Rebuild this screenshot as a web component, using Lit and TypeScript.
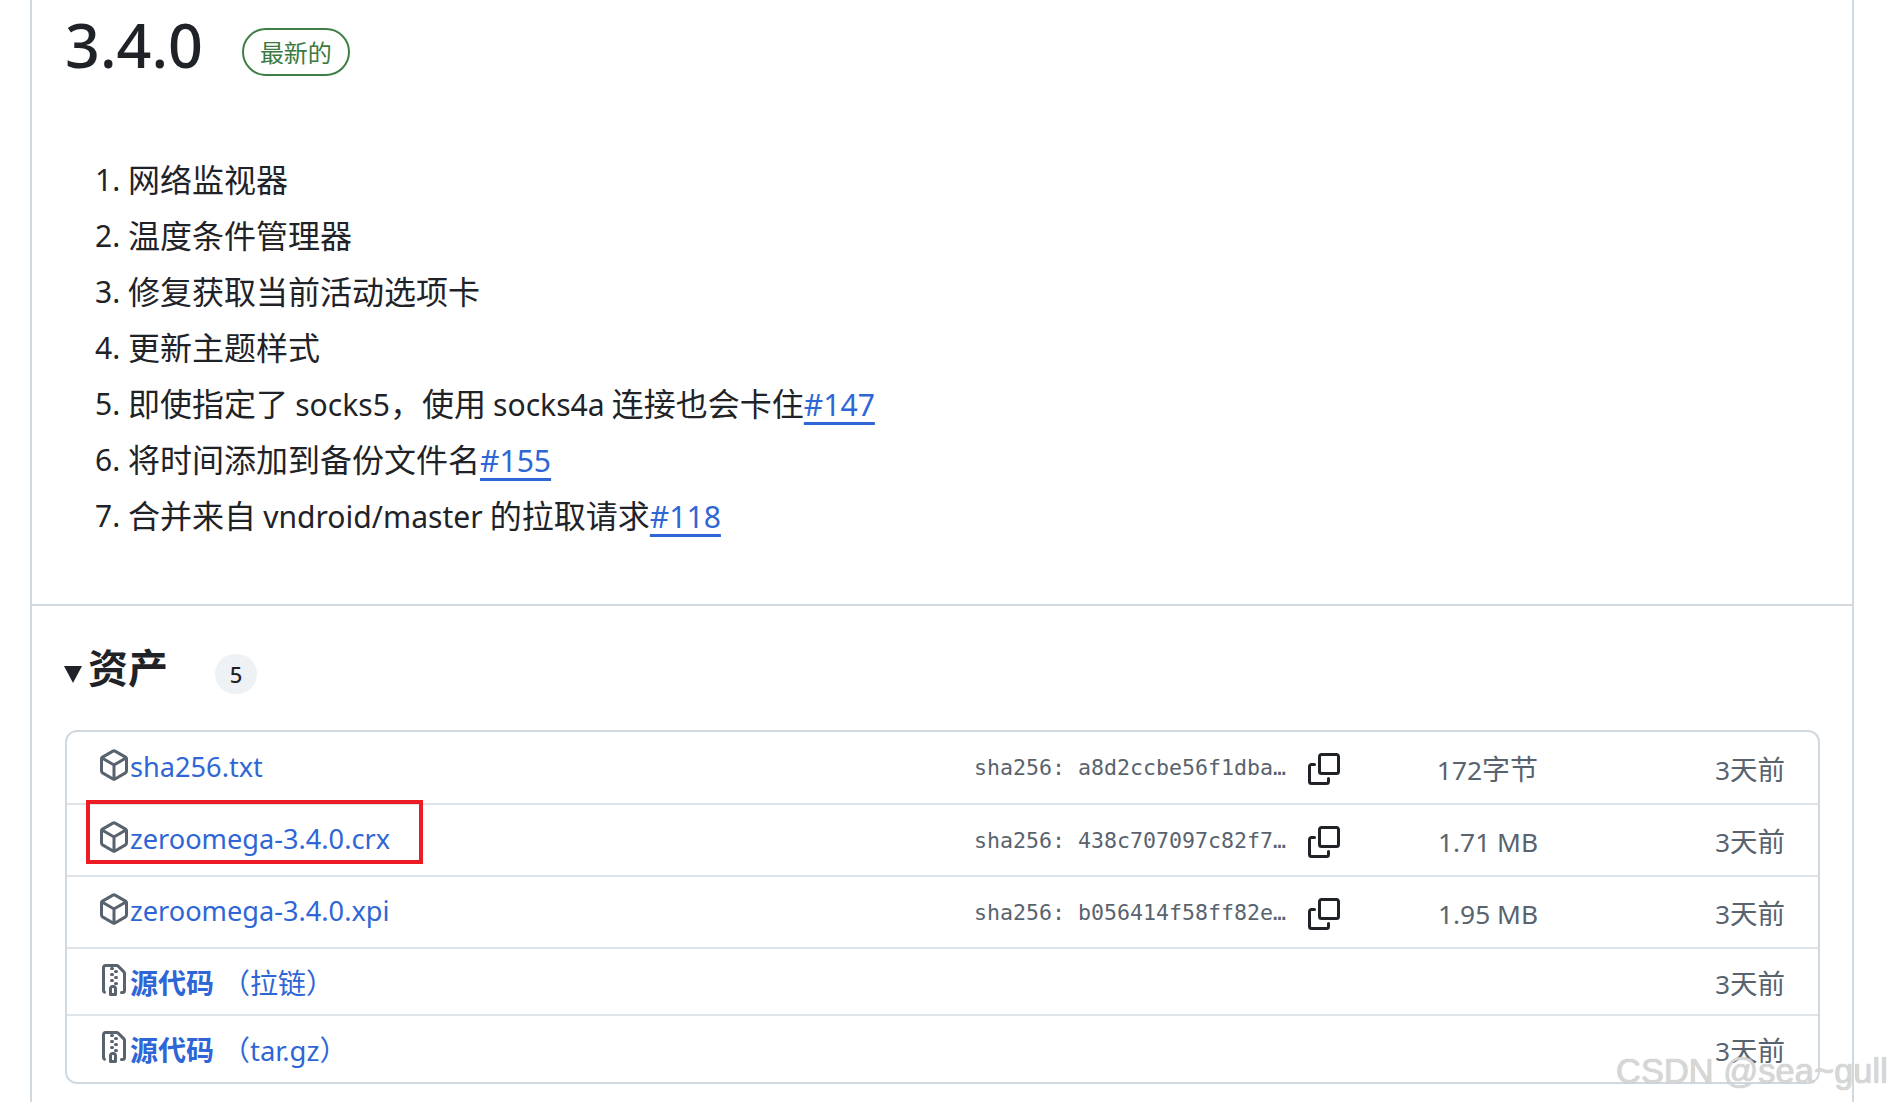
import { LitElement, html, css, svg } from "lit";
import { customElement } from "lit/decorators.js";

const PACKAGE = svg`<path d="m8.878.392 5.25 3.045c.54.314.872.89.872 1.514v6.098a1.75 1.75 0 0 1-.872 1.514l-5.25 3.045a1.75 1.75 0 0 1-1.756 0l-5.25-3.045A1.75 1.75 0 0 1 1 11.049V4.951c0-.624.332-1.201.872-1.514L7.122.392a1.75 1.75 0 0 1 1.756 0ZM7.875 1.69l-4.63 2.685L8 7.133l4.755-2.758-4.63-2.685a.248.248 0 0 0-.25 0ZM2.5 5.677v5.372c0 .09.047.171.125.216l4.625 2.683V8.432Zm6.25 8.271 4.625-2.683a.25.25 0 0 0 .125-.216V5.677L8.75 8.432Z"/>`;
const ZIP = svg`<path d="M3.5 1.75v11.5c0 .09.048.173.126.217a.75.75 0 0 1-.752 1.298A1.748 1.748 0 0 1 2 13.25V1.75C2 .784 2.784 0 3.75 0h5.586c.464 0 .909.185 1.237.513l2.914 2.914c.329.328.513.773.513 1.237v8.586A1.75 1.75 0 0 1 12.25 15h-.5a.75.75 0 0 1 0-1.5h.5a.25.25 0 0 0 .25-.25V4.664a.25.25 0 0 0-.073-.177L9.513 1.573a.25.25 0 0 0-.177-.073H7.25a.75.75 0 0 1 0 1.5h-.5a.75.75 0 0 1 0-1.5h-3a.25.25 0 0 0-.25.25Zm3.75 8.75h.5c.966 0 1.75.784 1.75 1.75v3a.75.75 0 0 1-.75.75h-2.5a.75.75 0 0 1-.75-.75v-3c0-.966.784-1.75 1.75-1.75ZM6 5.25a.75.75 0 0 1 .75-.75h.5a.75.75 0 0 1 0 1.5h-.5A.75.75 0 0 1 6 5.25Zm.75 2.25h.5a.75.75 0 0 1 0 1.5h-.5a.75.75 0 0 1 0-1.5ZM8 6.75A.75.75 0 0 1 8.75 6h.5a.75.75 0 0 1 0 1.5h-.5A.75.75 0 0 1 8 6.75ZM8.75 3h.5a.75.75 0 0 1 0 1.5h-.5a.75.75 0 0 1 0-1.5ZM8 9.75A.75.75 0 0 1 8.75 9h.5a.75.75 0 0 1 0 1.5h-.5A.75.75 0 0 1 8 9.75Zm-1 2.5v2.25h1v-2.25a.25.25 0 0 0-.25-.25h-.5a.25.25 0 0 0-.25.25Z"/>`;
const COPY = svg`<path d="M0 6.75C0 5.784.784 5 1.75 5h1.5a.75.75 0 0 1 0 1.5h-1.5a.25.25 0 0 0-.25.25v7.5c0 .138.112.25.25.25h7.5a.25.25 0 0 0 .25-.25v-1.5a.75.75 0 0 1 1.5 0v1.5A1.75 1.75 0 0 1 9.25 16h-7.5A1.75 1.75 0 0 1 0 14.25Z"/><path d="M5 1.75C5 .784 5.784 0 6.75 0h7.5C15.216 0 16 .784 16 1.75v7.5A1.75 1.75 0 0 1 14.25 11h-7.5A1.75 1.75 0 0 1 5 9.25Zm1.75-.25a.25.25 0 0 0-.25.25v7.5c0 .138.112.25.25.25h7.5a.25.25 0 0 0 .25-.25v-7.5a.25.25 0 0 0-.25-.25Z"/>`;

const icon = (p: unknown, cls: string) =>
  html`<svg class=${cls} viewBox="0 0 16 16" width="32" height="32" fill="currentColor">${p}</svg>`;

const files = [
  { name: "sha256.txt", hash: "sha256: a8d2ccbe56f1dba…", size: ["172", "字节"] },
  { name: "zeroomega-3.4.0.crx", hash: "sha256: 438c707097c82f7…", size: ["1.71 MB", ""] },
  { name: "zeroomega-3.4.0.xpi", hash: "sha256: b056414f58ff82e…", size: ["1.95 MB", ""] },
];

@customElement("app-root")
export class AppRoot extends LitElement {
  static styles = css`
    :host {
      display: block;
      position: relative;
      height: 1102px;
      overflow: hidden;
      background: #fff;
      color: #1f2328;
      font-family: "Noto Sans CJK SC", "Noto Sans", sans-serif;
    }
    .lat { font-family: "Noto Sans", sans-serif; font-size: 0.94em; }
    .release {
      box-sizing: border-box;
      width: 1824px;
      height: 1102px;
      margin-left: 30px;
      border-left: 2px solid #d1d9e0;
      border-right: 2px solid #d1d9e0;
    }
    .head {
      display: flex;
      align-items: center;
      height: 92px;
      padding-left: 33px;
    }
    h1 {
      margin: 0 0 2px;
      font: 500 61px/90px "Noto Sans", sans-serif;
    }
    .latest {
      box-sizing: border-box;
      display: flex;
      align-items: center;
      justify-content: center;
      width: 108px;
      height: 48px;
      margin: 12px 0 0 39px;
      border: 2px solid #3f7f45;
      border-radius: 24px;
      color: #3a7a40;
      font-size: 24px;
      line-height: 1;
    }
    ol {
      margin: 58px 0 0;
      padding: 0 0 62px 63px;
      border-bottom: 2px solid #d1d9e0;
      font-size: 32px;
      line-height: 56px;
      list-style: none;
    }
    li { display: flex; height: 56px; white-space: pre; }
    .num { width: 33px; padding-top: 2px; font-family: "Noto Sans", sans-serif; font-size: 30px; }
    li a {
      color: #2f66d6;
      text-decoration: underline 3px #2f66d6;
      text-underline-offset: 6px;
    }
    .assets { padding: 33px 0 0 33px; }
    .assets-head {
      display: flex;
      align-items: center;
      height: 60px;
      margin-bottom: 31px;
    }
    .tri {
      width: 0;
      height: 0;
      border-left: 9px solid transparent;
      border-right: 9px solid transparent;
      border-top: 17px solid #1f2328;
      margin: 10px 6px 0 -1px;
    }
    h2 {
      margin: 0 0 6px;
      font-size: 40px;
      font-weight: 700;
      line-height: 60px;
    }
    .count {
      display: flex;
      align-items: center;
      justify-content: center;
      width: 42px;
      height: 40px;
      margin: 10px 0 0 47px;
      border-radius: 20px;
      background: #eff2f5;
      font: 500 22px/1 "Noto Sans", sans-serif;
    }
    .box {
      box-sizing: border-box;
      width: 1755px;
      border: 2px solid #d1d9e0;
      border-radius: 12px;
    }
    .row {
      box-sizing: border-box;
      display: grid;
      grid-template-columns: 876px 315px 51px 198px 247px;
      align-items: center;
      height: 72px;
      padding-left: 31px;
      border-top: 2px solid #dfe4e8;
      font-size: 28px;
    }
    .row:first-child { border-top: 0; height: 71px; }
    .row.src { height: 67px; }
    .row.src:last-child { height: 68px; }
    .name {
      display: flex;
      align-items: center;
      color: #2f66d6;
      white-space: pre;
    }
    .name > .lat { font-size: 0.97em; margin-top: -3px; }
    .name svg { color: #59636e; margin-top: -6px; flex: none; }
    .name svg.zip { margin-top: -4px; }
    .name b { font-weight: 700; }
    .note { margin-left: 8px; }
    .note .lat { font-size: 0.98em; }
    .hash {
      margin-top: 1px;
      color: #59636e;
      font: 21.6px/1 "DejaVu Sans Mono", monospace;
      white-space: pre;
    }
    .copy {
      display: flex;
      justify-content: flex-end;
      margin-top: 3px;
      color: #1f2328;
    }
    .size, .time {
      color: #59636e;
      text-align: right;
      white-space: pre;
    }
    .time { font-size: 27.5px; }
    .mark {
      position: absolute;
      left: 86px;
      top: 800px;
      box-sizing: border-box;
      width: 337px;
      height: 64px;
      border: 4px solid #ed1c24;
    }
    .watermark {
      position: absolute;
      left: 1616px;
      top: 1049px;
      color: rgba(226, 226, 226, 0.85);
      font: 34.5px/44px "Liberation Sans", sans-serif;
      text-shadow: 0 0 1px #9a9a9a;
      white-space: pre;
    }
  `;

  private item(n: number, body: unknown) {
    return html`<li><span class="num">${n}.</span><span>${body}</span></li>`;
  }

  private time() {
    return html`<div class="time"><span class="lat">3</span>天前</div>`;
  }

  render() {
    return html`
      <div class="release">
        <div class="head">
          <h1>3.4.0</h1>
          <span class="latest">最新的</span>
        </div>
        <ol>
          ${this.item(1, html`网络监视器`)}
          ${this.item(2, html`温度条件管理器`)}
          ${this.item(3, html`修复获取当前活动选项卡`)}
          ${this.item(4, html`更新主题样式`)}
          ${this.item(5, html`即使指定了 <span class="lat">socks5</span>，使用 <span class="lat">socks4a</span> 连接也会卡住<a class="lat">#147</a>`)}
          ${this.item(6, html`将时间添加到备份文件名<a class="lat">#155</a>`)}
          ${this.item(7, html`合并来自 <span class="lat">vndroid/master</span> 的拉取请求<a class="lat">#118</a>`)}
        </ol>
        <section class="assets">
          <div class="assets-head">
            <span class="tri"></span>
            <h2>资产</h2>
            <span class="count">5</span>
          </div>
          <div class="box">
            ${files.map(
              (f) => html`
                <div class="row">
                  <div class="name">${icon(PACKAGE, "pkg")}<span class="lat">${f.name}</span></div>
                  <div class="hash">${f.hash}</div>
                  <div class="copy">${icon(COPY, "cp")}</div>
                  <div class="size"><span class="lat">${f.size[0]}</span>${f.size[1]}</div>
                  ${this.time()}
                </div>
              `
            )}
            ${["拉链", "tar.gz"].map(
              (n, i) => html`
                <div class="row src">
                  <div class="name">${icon(ZIP, "zip")}<b>源代码</b><span class="note">（${i === 0 ? n : html`<span class="lat">${n}</span>`}）</span></div>
                  <div></div>
                  <div></div>
                  <div></div>
                  ${this.time()}
                </div>
              `
            )}
          </div>
        </section>
      </div>
      <div class="mark"></div>
      <div class="watermark">CSDN @sea~gull</div>
    `;
  }
}
